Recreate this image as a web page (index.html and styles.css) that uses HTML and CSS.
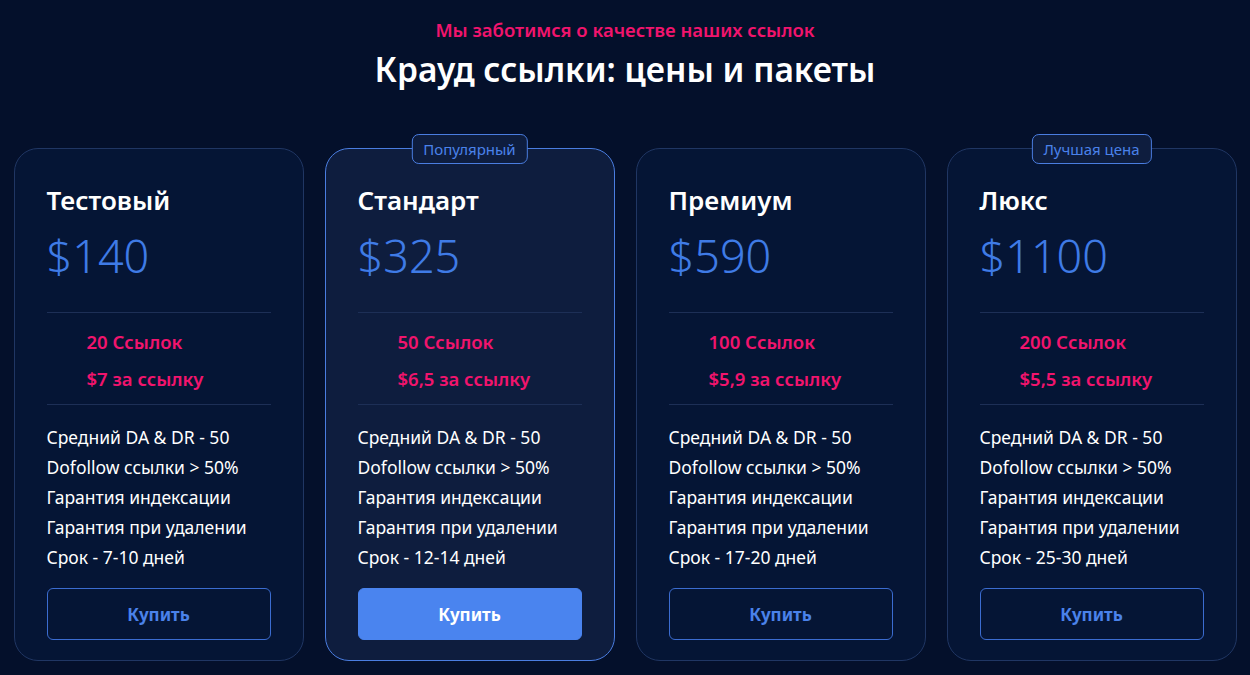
FILE: index.html
```html
<!DOCTYPE html>
<html lang="ru">
<head>
<meta charset="utf-8">
<title>Крауд ссылки</title>
<link rel="stylesheet" href="styles.css">
</head>
<body>
<section class="pricing">
  <header class="head">
    <p class="eyebrow">Мы заботимся о качестве наших ссылок</p>
    <h1 class="title">Крауд ссылки: цены и пакеты</h1>
  </header>
  <div class="cards">
    <article class="card">
      <h2 class="name">Тестовый</h2>
      <div class="price">$140</div>
      <div class="amount">
        <p>20 Ссылок</p>
        <p>$7 за ссылку</p>
      </div>
      <ul class="features">
        <li>Средний DA &amp; DR - 50</li>
        <li>Dofollow ссылки &gt; 50%</li>
        <li>Гарантия индексации</li>
        <li>Гарантия при удалении</li>
        <li>Срок - 7-10 дней</li>
      </ul>
      <button class="buy">Купить</button>
    </article>
    <article class="card featured">
      <span class="badge">Популярный</span>
      <h2 class="name">Стандарт</h2>
      <div class="price">$325</div>
      <div class="amount">
        <p>50 Ссылок</p>
        <p>$6,5 за ссылку</p>
      </div>
      <ul class="features">
        <li>Средний DA &amp; DR - 50</li>
        <li>Dofollow ссылки &gt; 50%</li>
        <li>Гарантия индексации</li>
        <li>Гарантия при удалении</li>
        <li>Срок - 12-14 дней</li>
      </ul>
      <button class="buy solid">Купить</button>
    </article>
    <article class="card">
      <h2 class="name">Премиум</h2>
      <div class="price">$590</div>
      <div class="amount">
        <p>100 Ссылок</p>
        <p>$5,9 за ссылку</p>
      </div>
      <ul class="features">
        <li>Средний DA &amp; DR - 50</li>
        <li>Dofollow ссылки &gt; 50%</li>
        <li>Гарантия индексации</li>
        <li>Гарантия при удалении</li>
        <li>Срок - 17-20 дней</li>
      </ul>
      <button class="buy">Купить</button>
    </article>
    <article class="card">
      <span class="badge">Лучшая цена</span>
      <h2 class="name">Люкс</h2>
      <div class="price">$1100</div>
      <div class="amount">
        <p>200 Ссылок</p>
        <p>$5,5 за ссылку</p>
      </div>
      <ul class="features">
        <li>Средний DA &amp; DR - 50</li>
        <li>Dofollow ссылки &gt; 50%</li>
        <li>Гарантия индексации</li>
        <li>Гарантия при удалении</li>
        <li>Срок - 25-30 дней</li>
      </ul>
      <button class="buy">Купить</button>
    </article>
  </div>
</section>
</body>
</html>
```

FILE: styles.css
```css
* { box-sizing: border-box; }
html, body {
  margin: 0;
  padding: 0;
  background: #04102b;
  height: 100%;
}
body {
  font-family: "Noto Sans", "Open Sans", sans-serif;
  color: #ffffff;
}
.pricing {
  padding-top: 18px;
}
.head {
  text-align: center;
}
.eyebrow {
  margin: 0;
  color: #f1146d;
  font-size: 18.5px;
  font-weight: 600;
  line-height: 24px;
}
.title {
  margin: 4px 0 0;
  font-size: 33.5px;
  font-weight: 600;
  line-height: 46px;
  color: #ffffff;
}
.cards {
  display: grid;
  grid-template-columns: repeat(4, 290px);
  gap: 21px;
  justify-content: center;
  margin-top: 56px;
}
.card {
  position: relative;
  background: #051535;
  border: 1px solid #203663;
  border-radius: 24px;
  padding: 35px 32px 20px;
  display: flex;
  flex-direction: column;
}
.card.featured {
  background: #0e1d3e;
  border-color: #4a7de0;
}
.badge {
  position: absolute;
  top: -15px;
  left: 50%;
  transform: translateX(-50%);
  height: 30px;
  padding: 0 11px;
  display: flex;
  align-items: center;
  border: 1px solid #4a7de0;
  border-radius: 7px;
  background: #0e1d3e;
  color: #4a82ea;
  font-size: 15px;
  white-space: nowrap;
}
.name {
  margin: 0;
  font-size: 26px;
  font-weight: 600;
  line-height: 32px;
}
.price {
  margin-top: 12px;
  font-size: 45px;
  font-weight: 300;
  line-height: 56px;
  color: #3f7be6;
  padding-bottom: 28px;
  border-bottom: 1px solid #1d2f56;
}
.amount {
  padding: 10px 0 7px 40px;
  border-bottom: 1px solid #1d2f56;
}
.amount p {
  margin: 0;
  color: #f1146d;
  font-size: 18.5px;
  font-weight: 600;
  line-height: 37px;
}
.features {
  list-style: none;
  margin: 0;
  padding: 17px 0 0;
}
.features li {
  font-size: 17.5px;
  line-height: 30px;
  color: #ffffff;
}
.buy {
  flex-shrink: 0;
  margin-top: 16px;
  height: 52px;
  width: 100%;
  border: 1px solid #3b6cd0;
  border-radius: 6px;
  background: transparent;
  color: #4a82ea;
  font-family: inherit;
  font-size: 17px;
  font-weight: 700;
  cursor: pointer;
}
.buy.solid {
  background: #4a84ef;
  border-color: #4a84ef;
  color: #ffffff;
}
```
